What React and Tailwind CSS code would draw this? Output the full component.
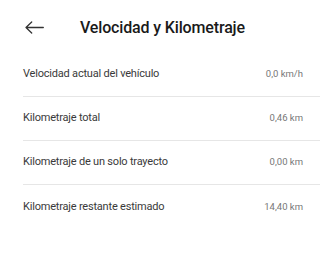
import React from 'react';

const rows = [
    { label: 'Velocidad actual del vehículo', value: '0,0 km/h' },
    { label: 'Kilometraje total', value: '0,46 km' },
    { label: 'Kilometraje de un solo trayecto', value: '0,00 km' },
    { label: 'Kilometraje restante estimado', value: '14,40 km' },
];

const App = () => {
    return (
        <div className="w-[320px] h-[276px] bg-white font-['Roboto',sans-serif]">
            <div className="flex items-center h-[53px] pl-[25px] pt-[2px]">
                <svg width="19" height="13" viewBox="0 0 19 13" fill="none" stroke="#333" strokeWidth="1.3" strokeLinecap="round" strokeLinejoin="round">
                    <path d="M18.3 6.5H1M6.7 1L1 6.5l5.7 5.5" />
                </svg>
                <h1 className="ml-[36px] text-[16px] font-medium text-[#1a1a1a] tracking-[-0.15px]">Velocidad y Kilometraje</h1>
            </div>
            <div className="pl-[23px]">
                {rows.map((row, i) => (
                    <div
                        key={row.label}
                        className={`flex items-center justify-between h-[44px] pr-[17px] ${i < rows.length - 1 ? 'border-b border-[#e6e6e6]' : ''}`}
                    >
                        <span className="text-[11px] text-[#3a3a3a] tracking-[-0.2px]">{row.label}</span>
                        <span className="text-[9.5px] text-[#777]">{row.value}</span>
                    </div>
                ))}
            </div>
        </div>
    );
};

export default App;
